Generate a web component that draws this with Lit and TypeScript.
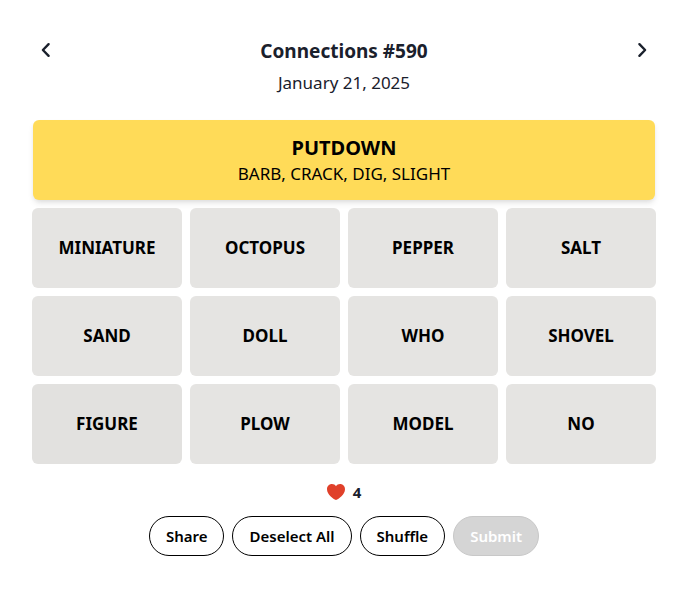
import { LitElement, html, css } from "lit";
import { customElement, property, state } from "lit/decorators.js";

@customElement("word-tile")
class WordTile extends LitElement {
  @property() word = "";
  @property({ type: Boolean }) pressed = false;

  static styles = css`
    :host {
      display: block;
    }
    .tile {
      width: 100%;
      height: 80px;
      padding: 0 8px;
      border: 0;
      border-radius: 6px;
      background: #e5e4e2;
      color: #000;
      font: 700 17px/24px "Segoe UI", "Noto Sans", sans-serif;
      cursor: pointer;
    }
    .tile:hover,
    .active {
      background: #e2e1df;
    }
  `;

  render() {
    return html`<button class="tile ${this.pressed ? "active" : ""}">${this.word}</button>`;
  }
}

@customElement("app-root")
class AppRoot extends LitElement {
  @state() words = [
    "MINIATURE", "OCTOPUS", "PEPPER", "SALT",
    "SAND", "DOLL", "WHO", "SHOVEL",
    "FIGURE", "PLOW", "MODEL", "NO",
  ];
  @state() lives = 4;

  static styles = css`
    :host {
      display: block;
      font-family: "Segoe UI", "Noto Sans", sans-serif;
      color: #1a202c;
      background: #fff;
    }
    main {
      box-sizing: border-box;
      max-width: 690px;
      margin: 0 auto;
      padding: 35px 34px 40px 32px;
    }
    header {
      display: flex;
      justify-content: space-between;
      align-items: flex-start;
      margin-bottom: 21px;
    }
    h1,
    h2,
    p {
      margin: 0;
    }
    .heading {
      text-align: center;
    }
    h1 {
      font-size: 19px;
      line-height: 32px;
      font-weight: 700;
    }
    .date {
      font-size: 17px;
      line-height: 32px;
    }
    .nav {
      display: flex;
      padding: 3px 2px;
      border: 0;
      background: none;
      color: inherit;
      cursor: pointer;
    }
    .solved {
      box-sizing: border-box;
      display: flex;
      flex-direction: column;
      justify-content: center;
      align-items: center;
      min-height: 80px;
      margin: 0 1px 8px;
      padding-top: 2px;
      border-radius: 6px;
      background: #ffdb58;
      color: #000;
      box-shadow: 0 4px 6px -1px rgba(0, 0, 0, 0.1), 0 2px 4px -1px rgba(0, 0, 0, 0.06);
    }
    .solved h2 {
      font-size: 20px;
      line-height: 26px;
      font-weight: 700;
    }
    .solved p {
      font-size: 17px;
      line-height: 26px;
    }
    .board {
      display: grid;
      grid-template-columns: repeat(4, 1fr);
      gap: 8px;
    }
    .lives {
      display: flex;
      justify-content: center;
      align-items: center;
      gap: 8px;
      margin: 16px 0 12px;
      font-size: 15px;
      line-height: 24px;
      font-weight: 700;
    }
    .actions {
      display: flex;
      flex-wrap: wrap;
      justify-content: center;
      gap: 8px;
    }
    .action {
      height: 40px;
      padding: 0 16px;
      border: 1px solid #000;
      border-radius: 20px;
      background: #fff;
      color: #000;
      font: 600 15px/24px "Segoe UI", "Noto Sans", sans-serif;
      cursor: pointer;
    }
    .action:disabled {
      border-color: #c8c8c8;
      background: #d5d5d5;
      color: #fff;
      cursor: not-allowed;
    }
  `;

  render() {
    return html`
      <main>
        <header>
          <button class="nav" aria-label="Previous puzzle">
            <svg width="24" height="24" viewBox="0 0 24 24" fill="none" stroke="currentColor" stroke-width="2.4" stroke-linecap="round" stroke-linejoin="round">
              <path d="M14.6 6.2 8.9 12l5.7 5.8" />
            </svg>
          </button>
          <div class="heading">
            <h1>Connections #590</h1>
            <p class="date">January 21, 2025</p>
          </div>
          <button class="nav" aria-label="Next puzzle">
            <svg width="24" height="24" viewBox="0 0 24 24" fill="none" stroke="currentColor" stroke-width="2.4" stroke-linecap="round" stroke-linejoin="round">
              <path d="M9.4 6.2 15.1 12l-5.7 5.8" />
            </svg>
          </button>
        </header>
        <section class="solved">
          <h2>PUTDOWN</h2>
          <p>BARB, CRACK, DIG, SLIGHT</p>
        </section>
        <section class="board">
          ${this.words.map((w) => html`<word-tile .word=${w} .pressed=${w === "FIGURE"}></word-tile>`)}
        </section>
        <div class="lives">
          <svg width="18" height="16" viewBox="0 0 18 16" aria-hidden="true">
            <path fill="#e0402a" d="M9 16C6.3 15 0 10.600 0 5.200 0 2.200 2.200 0 4.900 0 6.700 0 8.200 0.900 9 2.300 9.800 0.900 11.300 0 13.100 0 15.800 0 18 2.200 18 5.200 18 10.600 11.700 15 9 16Z" />
          </svg>
          <span>${this.lives}</span>
        </div>
        <div class="actions">
          <button class="action">Share</button>
          <button class="action">Deselect All</button>
          <button class="action">Shuffle</button>
          <button class="action" disabled>Submit</button>
        </div>
      </main>
    `;
  }
}
